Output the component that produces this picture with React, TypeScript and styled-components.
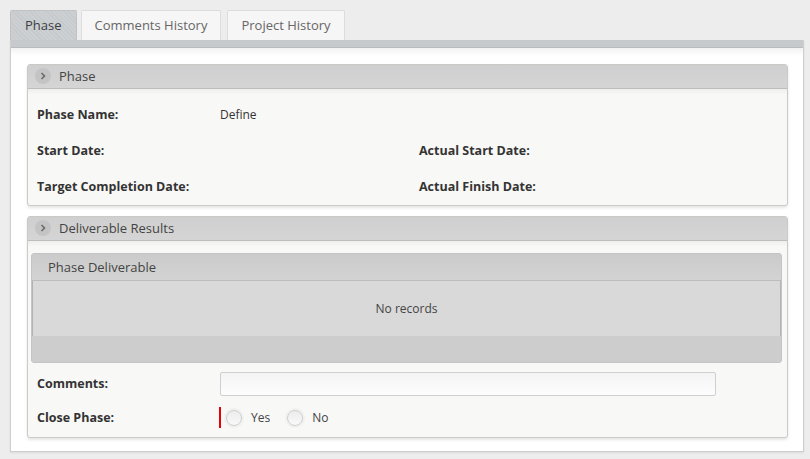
import styled, { createGlobalStyle } from "styled-components";

const GlobalStyle = createGlobalStyle`
  html, body {
    margin: 0;
    padding: 0;
    background: #ededed;
    font-family: "Open Sans", "DejaVu Sans", sans-serif;
    color: #333;
  }
`;

const Page = styled.div`
  width: 810px;
  height: 459px;
  padding: 10px 6px 0 10px;
  box-sizing: border-box;
`;

const TabBar = styled.div`
  display: flex;
  gap: 4px;
  height: 30px;
`;

const Tab = styled.div<{ $active?: boolean }>`
  display: flex;
  align-items: center;
  padding: 0 ${(p) => (p.$active ? "14px" : "13px")} 1px;
  margin-right: ${(p) => (p.$active ? "0" : "2px")};
  font-size: 13px;
  color: ${(p) => (p.$active ? "#3a3f44" : "#666")};
  background: ${(p) =>
    p.$active
      ? "repeating-linear-gradient(45deg, #c6c9cb 0 1px, #cdd0d2 1px 3px)"
      : "#f6f6f6"};
  border: 1px solid ${(p) => (p.$active ? "#c0c3c5" : "#dcdcdc")};
  border-bottom: none;
  border-radius: 2px 2px 0 0;
  box-sizing: border-box;
`;

const Outer = styled.div`
  background: #fff;
  border: 1px solid #cfd0cc;
  border-top: none;
  height: 412px;
  box-sizing: border-box;
  box-shadow: 0 1px 2px rgba(0, 0, 0, 0.08);
`;

const StripBar = styled.div`
  height: 7px;
  background: #c6cacc;
  border-bottom: 1px solid #b8bcbe;
`;

const OuterBody = styled.div`
  padding: 16px 15px 0 16px;
  display: flex;
  flex-direction: column;
  gap: 10px;
  background: linear-gradient(
    to bottom,
    rgba(0, 0, 0, 0.05),
    rgba(255, 255, 255, 0) 8px
  );
`;

const Panel = styled.div`
  border: 1px solid #cacac6;
  border-radius: 3px;
  background: #f8f8f6;
  box-shadow: 0 2px 3px rgba(0, 0, 0, 0.1);
  overflow: hidden;
`;

const PanelHeader = styled.div`
  height: 22px;
  display: flex;
  align-items: center;
  gap: 8px;
  padding: 0 0 1px 7px;
  background: linear-gradient(to bottom, #cfcfcf, #d5d5d5);
  border-bottom: 1px solid #bdbdbb;
  font-size: 13px;
  color: #444;
`;

const Chevron = styled.span`
  width: 16px;
  height: 16px;
  border-radius: 50%;
  background: #c4c4c4;
  display: flex;
  align-items: center;
  justify-content: center;
`;

const PanelBody = styled.div<{ $pad?: string }>`
  padding: ${(p) => p.$pad ?? "17px 10px 9px 9px"};
  background: linear-gradient(
    to bottom,
    rgba(0, 0, 0, 0.04),
    rgba(255, 255, 255, 0) 6px
  );
`;

const FieldGrid = styled.div`
  display: grid;
  grid-template-columns: 183px 199px 1fr;
  grid-auto-rows: 18px;
  row-gap: 18px;
  align-items: center;
`;

const Label = styled.div`
  font-size: 12.5px;
  font-weight: 700;
  color: #333;
  line-height: 18px;
  white-space: nowrap;
`;

const Value = styled.div`
  font-size: 12px;
  color: #333;
  line-height: 18px;
`;

const Grid = styled.div`
  margin: 0 5px 0 3px;
  border: 1px solid #c4c4c4;
  border-radius: 3px;
  overflow: hidden;
  background: #cdcdcd;
`;

const GridHeader = styled.div`
  height: 26px;
  display: flex;
  align-items: center;
  padding-left: 16px;
  font-size: 13px;
  color: #444;
  background: linear-gradient(to bottom, #cbcbcb, #d3d3d3);
  border-bottom: 1px solid #bcbcbc;
`;

const GridBody = styled.div`
  height: 55px;
  background: #d9d9d9;
  border-left: 1px solid #b3b3b3;
  border-right: 1px solid #b3b3b3;
  display: flex;
  align-items: center;
  justify-content: center;
  font-size: 12px;
  color: #444;
`;

const GridFooter = styled.div`
  height: 26px;
  background: #cdcdcd;
`;

const FormRow = styled.div<{ $top: number; $height: number }>`
  display: flex;
  align-items: center;
  height: ${(p) => p.$height}px;
  margin-top: ${(p) => p.$top}px;
  padding-left: 9px;
`;

const FormLabel = styled(Label)`
  width: 183px;
`;

const TextInput = styled.div`
  width: 496px;
  height: 24px;
  box-sizing: border-box;
  border: 1px solid #cfcfcf;
  border-radius: 2px;
  background: linear-gradient(to bottom, #f4f4f4, #fdfdfd);
`;

const Radios = styled.div`
  display: flex;
  align-items: center;
  height: 21px;
  border-left: 2px solid #e8000b;
  padding-left: 5px;
  margin-left: -1px;
`;

const RadioCircle = styled.span`
  width: 14px;
  height: 14px;
  border-radius: 50%;
  border: 1px solid #cfcfcf;
  background: linear-gradient(to bottom, #ececec, #f9f9f9);
  box-shadow: 0 0 0 2px #f0f0ee;
  margin-right: 9px;
`;

const RadioText = styled.span`
  font-size: 12px;
  color: #444;
  margin-right: 17px;
`;

function ChevronIcon() {
  return (
    <Chevron>
      <svg width="8" height="8" viewBox="0 0 8 8">
        <path
          d="M2.5 1 L5.5 4 L2.5 7"
          fill="none"
          stroke="#6a6a6a"
          strokeWidth="1.6"
        />
      </svg>
    </Chevron>
  );
}

export default function App() {
  return (
    <Page>
      <GlobalStyle />
      <TabBar>
        <Tab $active>Phase</Tab>
        <Tab>Comments History</Tab>
        <Tab>Project History</Tab>
      </TabBar>
      <Outer>
        <StripBar />
        <OuterBody>
          <Panel>
            <PanelHeader>
              <ChevronIcon />
              Phase
            </PanelHeader>
            <PanelBody>
              <FieldGrid>
                <Label>Phase Name:</Label>
                <Value>Define</Value>
                <div />
                <Label>Start Date:</Label>
                <div />
                <Label>Actual Start Date:</Label>
                <Label>Target Completion Date:</Label>
                <div />
                <Label>Actual Finish Date:</Label>
              </FieldGrid>
            </PanelBody>
          </Panel>
          <Panel>
            <PanelHeader>
              <ChevronIcon />
              Deliverable Results
            </PanelHeader>
            <PanelBody $pad="12px 0 9px 0">
              <Grid>
                <GridHeader>Phase Deliverable</GridHeader>
                <GridBody>No records</GridBody>
                <GridFooter />
              </Grid>
              <FormRow $top={9} $height={24}>
                <FormLabel>Comments:</FormLabel>
                <TextInput />
              </FormRow>
              <FormRow $top={11} $height={21}>
                <FormLabel>Close Phase:</FormLabel>
                <Radios>
                  <RadioCircle />
                  <RadioText>Yes</RadioText>
                  <RadioCircle />
                  <RadioText>No</RadioText>
                </Radios>
              </FormRow>
            </PanelBody>
          </Panel>
        </OuterBody>
      </Outer>
    </Page>
  );
}
